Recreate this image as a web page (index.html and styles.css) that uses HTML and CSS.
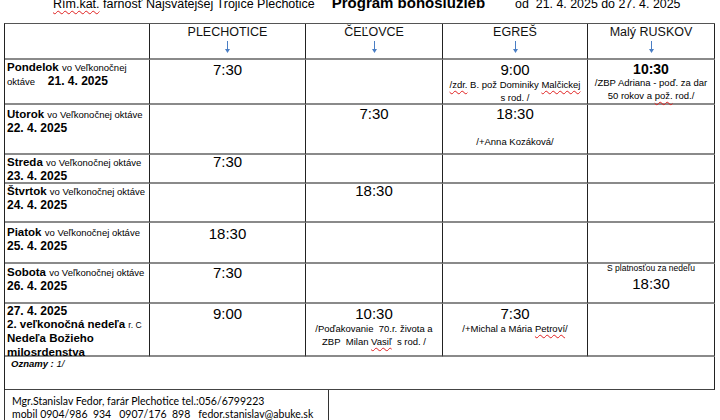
FILE: index.html
```html
<!DOCTYPE html>
<html lang="sk">
<head>
<meta charset="utf-8">
<link rel="stylesheet" href="styles.css">
<title>Program bohoslužieb</title>
</head>
<body>
<div class="title">
  <span class="t1"><span class="sp">Rím.kat.</span> farnosť Najsvätejšej Trojice Plechotice</span>
  <span class="t2">Program bohoslužieb</span>
  <span class="t3">od&nbsp; 21. 4. 2025 do 27. 4. 2025</span>
</div>
<div class="sched">
  <!-- header -->
  <div class="cell head"></div>
  <div class="cell head"><div class="place">PLECHOTICE</div><svg class="arrow" viewBox="0 0 7 12" width="7" height="12"><line x1="3.5" y1="0" x2="3.5" y2="9" /><polygon points="1,8 6,8 3.5,12"/></svg></div>
  <div class="cell head"><div class="place">ČEĽOVCE</div><svg class="arrow" viewBox="0 0 7 12" width="7" height="12"><line x1="3.5" y1="0" x2="3.5" y2="9" /><polygon points="1,8 6,8 3.5,12"/></svg></div>
  <div class="cell head"><div class="place">EGREŠ</div><svg class="arrow" viewBox="0 0 7 12" width="7" height="12"><line x1="3.5" y1="0" x2="3.5" y2="9" /><polygon points="1,8 6,8 3.5,12"/></svg></div>
  <div class="cell head"><div class="place">Malý RUSKOV</div><svg class="arrow" viewBox="0 0 7 12" width="7" height="12"><line x1="3.5" y1="0" x2="3.5" y2="9" /><polygon points="1,8 6,8 3.5,12"/></svg></div>

  <!-- Pondelok -->
  <div class="cell day d1"><b class="dn">Pondelok</b> <span class="sm">vo Veľkonočnej<br>oktáve</span> &nbsp;&nbsp; <b class="dt">21. 4. 2025</b></div>
  <div class="cell tc p1"><div class="time">7:30</div></div>
  <div class="cell"></div>
  <div class="cell tc p1"><div class="time">9:00</div><div class="note"><span class="sp">/zdr.</span> B. pož Dominiky <span class="sp">Malčickej</span><br>s rod. /</div></div>
  <div class="cell tc p2"><div class="time bold">10:30</div><div class="note">/ZBP Adriana - poď. za dar<br>50 rokov a <span class="sp">pož.</span> rod./</div></div>

  <!-- Utorok -->
  <div class="cell day d3"><b class="dn">Utorok</b> <span class="sm">vo Veľkonočnej oktáve</span><br><b class="dt">22. 4. 2025</b></div>
  <div class="cell"></div>
  <div class="cell tc"><div class="time">7:30</div></div>
  <div class="cell tc"><div class="time">18:30</div><div class="note gap">/+Anna Kozáková/</div></div>
  <div class="cell"></div>

  <!-- Streda -->
  <div class="cell day d1"><b class="dn">Streda</b> <span class="sm">vo Veľkonočnej oktáve</span><br><b class="dt">23. 4. 2025</b></div>
  <div class="cell tc up"><div class="time">7:30</div></div>
  <div class="cell"></div>
  <div class="cell"></div>
  <div class="cell"></div>

  <!-- Štvrtok -->
  <div class="cell day d1"><b class="dn">Štvrtok</b> <span class="sm">vo Veľkonočnej oktáve</span><br><b class="dt">24. 4. 2025</b></div>
  <div class="cell"></div>
  <div class="cell tc up"><div class="time">18:30</div></div>
  <div class="cell"></div>
  <div class="cell"></div>

  <!-- Piatok -->
  <div class="cell day d3"><b class="dn">Piatok</b> <span class="sm">vo Veľkonočnej oktáve</span><br><b class="dt">25. 4. 2025</b></div>
  <div class="cell tc p2"><div class="time">18:30</div></div>
  <div class="cell"></div>
  <div class="cell"></div>
  <div class="cell"></div>

  <!-- Sobota -->
  <div class="cell day d2"><b class="dn">Sobota</b> <span class="sm">vo Veľkonočnej oktáve</span><br><b class="dt">26. 4. 2025</b></div>
  <div class="cell tc"><div class="time">7:30</div></div>
  <div class="cell"></div>
  <div class="cell"></div>
  <div class="cell tc"><div class="tiny">S platnosťou za nedeľu</div><div class="time after">18:30</div></div>

  <!-- Nedeľa -->
  <div class="cell day d1 sun"><b class="dt">27. 4. 2025</b><br><b class="dn">2. veľkonočná nedeľa</b> <span class="rc">r. C</span><br><b class="dn">Nedeľa Božieho<br>milosrdenstva</b></div>
  <div class="cell tc p1"><div class="time">9:00</div></div>
  <div class="cell tc p1"><div class="time">10:30</div><div class="note">/Poďakovanie&nbsp; 70.r. života a<br>ZBP&nbsp; Milan <span class="sp">Vasiľ</span>&nbsp; s rod. /</div></div>
  <div class="cell tc p1"><div class="time">7:30</div><div class="note">/+Michal a Mária <span class="sp">Petroví</span>/</div></div>
  <div class="cell"></div>

  <!-- Oznamy -->
  <div class="cell ozn"><b><i>Oznamy : </i></b><i>1/</i></div>
</div>
<div class="footer">
  <div>Mgr.Stanislav Fedor, farár Plechotice tel.:056/6799223</div>
  <div>mobil 0904/986&nbsp; 934&nbsp;&nbsp; 0907/176&nbsp; 898&nbsp;&nbsp; fedor.stanislav@abuke.sk</div>
</div>
</body>
</html>
```
FILE: styles.css
```css
html, body {
  margin: 0;
  padding: 0;
  background: #fff;
  color: #000;
  font-family: "Liberation Sans", Arial, sans-serif;
  overflow: hidden;
}

.title {
  height: 23px;
  display: flex;
  align-items: flex-start;
  white-space: nowrap;
}
.t1 {
  font-size: 12.5px;
  line-height: 12px;
  margin-top: -2px;
  margin-left: 53px;
}
.t2 {
  font-size: 15px;
  font-weight: bold;
  line-height: 14px;
  margin-top: -4px;
  margin-left: 17px;
}
.t3 {
  font-size: 12.4px;
  line-height: 12px;
  margin-top: -2px;
  margin-left: 30px;
}

.sp {
  text-decoration: underline wavy #e02020;
  text-decoration-thickness: 1px;
  text-underline-offset: 2px;
}

.sched {
  display: grid;
  grid-template-columns: 145px 156px 137px 145px 127px;
  grid-template-rows: 36px 45px 50px 29px 39px 41px 40px 53px 33px;
  width: 710px;
  margin-left: 4px;
  border-left: 1px solid #222;
  border-top: 1px solid #555;
}
.cell {
  box-sizing: border-box;
  border-right: 1px solid #222;
  border-bottom: 2px solid #8a8a8a;
  min-width: 0;
}
.head { text-align: center; }

.place {
  font-size: 12.5px;
  line-height: 14px;
  padding-top: 1px;
  color: #111;
}
.arrow {
  display: block;
  margin: 2px auto 0;
}
.arrow line { stroke: #4a7ec4; stroke-width: 1; }
.arrow polygon { fill: #4a7ec4; }

.day {
  padding: 0 0 0 2px;
  font-size: 11.5px;
  line-height: 13.5px;
  white-space: nowrap;
}
.day.sun { line-height: 13.2px; }
.d1 { padding-top: 1px; }
.d2 { padding-top: 2px; }
.d3 { padding-top: 3px; }
.dn { font-size: 11.5px; }
.dt { font-size: 12px; }
.sm { font-size: 9.5px; }
.rc { font-size: 8.5px; }

.tc { text-align: center; }
.p1 { padding-top: 1px; }
.p2 { padding-top: 2px; }
.up .time { margin-top: -2px; }

.time {
  font-size: 15px;
  line-height: 17px;
}
.time.bold {
  font-weight: bold;
  font-size: 14px;
  line-height: 14px;
}
.note {
  font-size: 9.5px;
  line-height: 12.6px;
  margin-top: 1px;
  white-space: nowrap;
}
.note.gap { margin-top: 14px; }
.tiny {
  font-size: 8.5px;
  line-height: 9px;
}
.time.after { padding-top: 2px; }

.ozn {
  grid-column: 1 / -1;
  font-size: 9.5px;
  line-height: 12px;
  padding-left: 6px;
  padding-top: 1px;
  border-bottom: 1.5px solid #444;
}

.footer {
  box-sizing: border-box;
  width: 325px;
  height: 40px;
  border-left: 1px solid #333;
  border-right: 1px solid #333;
  margin-left: 4px;
  padding: 5px 0 0 7px;
  font-family: Lato, "Open Sans", sans-serif;
  font-size: 10.5px;
  line-height: 13.3px;
  white-space: nowrap;
}
```
